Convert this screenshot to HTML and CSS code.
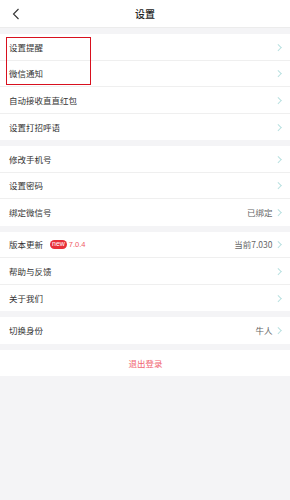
FILE: index.html
```html
<!DOCTYPE html>
<html lang="zh">
<head>
<meta charset="utf-8">
<link rel="stylesheet" href="styles.css">
</head>
<body>
<div class="page">
  <header class="topbar">
    <svg class="back" width="8" height="12" viewBox="0 0 8 12"><path d="M6.5 1 L1.5 6 L6.5 11" fill="none" stroke="#333" stroke-width="1.1"/></svg>
    <div class="title">设置</div>
  </header>

  <section class="group">
    <div class="highlight"></div>
    <div class="row"><span class="label">设置提醒</span><span class="right"><i class="chev"></i></span></div>
    <div class="row"><span class="label">微信通知</span><span class="right"><i class="chev"></i></span></div>
    <div class="row"><span class="label">自动接收直直红包</span><span class="right"><i class="chev"></i></span></div>
    <div class="row"><span class="label">设置打招呼语</span><span class="right"><i class="chev"></i></span></div>
  </section>

  <section class="group">
    <div class="row"><span class="label">修改手机号</span><span class="right"><i class="chev"></i></span></div>
    <div class="row"><span class="label">设置密码</span><span class="right"><i class="chev"></i></span></div>
    <div class="row"><span class="label">绑定微信号</span><span class="right"><span class="val">已绑定</span><i class="chev"></i></span></div>
  </section>

  <section class="group">
    <div class="row"><span class="label">版本更新<span class="badge">new</span><span class="ver">7.0.4</span></span><span class="right"><span class="val">当前7.030</span><i class="chev"></i></span></div>
    <div class="row"><span class="label">帮助与反馈</span><span class="right"><i class="chev"></i></span></div>
    <div class="row"><span class="label">关于我们</span><span class="right"><i class="chev"></i></span></div>
  </section>

  <section class="group">
    <div class="row"><span class="label">切换身份</span><span class="right"><span class="val">牛人</span><i class="chev"></i></span></div>
  </section>

  <section class="group">
    <div class="row logout">退出登录</div>
  </section>
</div>
</body>
</html>
```

FILE: styles.css
```css
* { box-sizing: border-box; margin: 0; padding: 0; }
html, body { background: #f4f4f6; }
body {
  font-family: "Noto Sans CJK SC", "Liberation Sans", sans-serif;
  color: #333;
  width: 290px;
  height: 500px;
  overflow: hidden;
}
.page { display: flex; flex-direction: column; gap: 6px; }
.topbar {
  height: 28px;
  background: #fff;
  display: flex;
  align-items: center;
  justify-content: center;
  position: relative;
  border-bottom: 1px solid #ececec;
}
.back { position: absolute; left: 12px; top: 8px; }
.title { font-size: 10px; font-weight: 500; color: #222; }
.group { background: #fff; position: relative; }
.row {
  height: 26.5px;
  display: flex;
  align-items: center;
  justify-content: space-between;
  padding: 0 8px 0 9px;
  font-size: 8.5px;
  border-bottom: 1px solid #efefef;
}
.row:last-child { border-bottom: none; }
.label { display: flex; align-items: center; }
.right { display: flex; align-items: center; gap: 3px; color: #666; }
.val { font-size: 8.5px; color: #666; }
.chev {
  display: inline-block;
  width: 4.5px; height: 4.5px;
  border-top: 1px solid #b8e0e0;
  border-right: 1px solid #b8e0e0;
  transform: rotate(45deg);
  margin-right: 2px;
}
.badge {
  display: inline-block;
  background: #e8303a;
  color: #fff;
  font-family: "Liberation Sans", sans-serif;
  font-size: 7px;
  line-height: 8.5px;
  height: 8.5px;
  padding: 0 2px;
  border-radius: 4.5px;
  margin-left: 7px;
}
.ver {
  color: #ef5a66;
  font-family: "Liberation Sans", sans-serif;
  font-size: 7.5px;
  margin-left: 2px;
}
.logout {
  justify-content: center;
  color: #f06470;
  font-size: 8.5px;
}
.highlight {
  position: absolute;
  left: 6px;
  top: 3px;
  width: 85px;
  height: 48px;
  border: 1.5px solid #d8101e;
}
```
